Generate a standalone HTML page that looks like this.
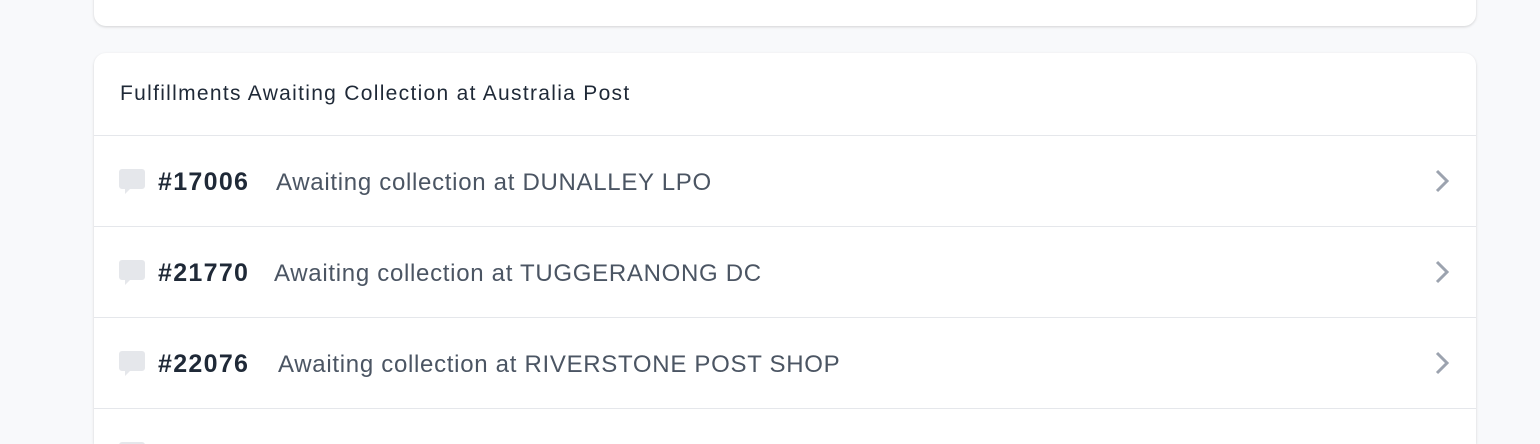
<!DOCTYPE html>
<html><head><style>
html,body{margin:0;width:1540px;height:444px;overflow:hidden}
body{background:#f8f9fb;font-family:"Liberation Sans",sans-serif;position:relative}
.card{position:absolute;left:94px;width:1382px;background:#fff;border-radius:12px;box-shadow:0 1px 3px rgba(0,0,0,.1),0 1px 2px rgba(0,0,0,.06)}
.h{height:83px;border-bottom:1px solid #e5e7eb;box-sizing:border-box;padding:29px 0 0 26px;font-size:21px;letter-spacing:1.3px;color:#1f2937}
.r{height:91px;border-bottom:1px solid #e5e7eb;box-sizing:border-box;position:relative}
.ic{position:absolute;left:25px;top:33px}
.n{position:absolute;left:64px;top:32px;font-size:25px;letter-spacing:1.3px;font-weight:bold;color:#1f2937}
.t{position:absolute;top:33px;font-size:24px;letter-spacing:0.7px;color:#4b5563}
.ch{position:absolute;right:26px;top:33px}
</style></head><body>
<div class="card" style="top:-20px;height:46px"></div>
<div class="card" style="top:53px;height:391px;border-radius:12px 12px 0 0">
<div class="h">Fulfillments Awaiting Collection at Australia Post</div>
<div class="r"><svg class="ic" width="26" height="25" viewBox="0 0 26 25"><path d="M3 0h20a3 3 0 0 1 3 3v14a3 3 0 0 1-3 3H11l-5 5v-5H3a3 3 0 0 1-3-3V3a3 3 0 0 1 3-3z" fill="#e5e7eb"/></svg><span class="n">#17006</span><span class="t" style="left:182px">Awaiting collection at DUNALLEY LPO</span><svg class="ch" width="16" height="24" viewBox="0 0 16 24"><path d="M3 2l10 10-10 10" stroke="#9ca3af" stroke-width="3" fill="none"/></svg></div>
<div class="r"><svg class="ic" width="26" height="25" viewBox="0 0 26 25"><path d="M3 0h20a3 3 0 0 1 3 3v14a3 3 0 0 1-3 3H11l-5 5v-5H3a3 3 0 0 1-3-3V3a3 3 0 0 1 3-3z" fill="#e5e7eb"/></svg><span class="n">#21770</span><span class="t" style="left:180px">Awaiting collection at TUGGERANONG DC</span><svg class="ch" width="16" height="24" viewBox="0 0 16 24"><path d="M3 2l10 10-10 10" stroke="#9ca3af" stroke-width="3" fill="none"/></svg></div>
<div class="r"><svg class="ic" width="26" height="25" viewBox="0 0 26 25"><path d="M3 0h20a3 3 0 0 1 3 3v14a3 3 0 0 1-3 3H11l-5 5v-5H3a3 3 0 0 1-3-3V3a3 3 0 0 1 3-3z" fill="#e5e7eb"/></svg><span class="n">#22076</span><span class="t" style="left:184px">Awaiting collection at RIVERSTONE POST SHOP</span><svg class="ch" width="16" height="24" viewBox="0 0 16 24"><path d="M3 2l10 10-10 10" stroke="#9ca3af" stroke-width="3" fill="none"/></svg></div>
<div style="position:relative;height:36px;overflow:hidden"><svg class="ic" width="26" height="25" viewBox="0 0 26 25"><path d="M3 0h20a3 3 0 0 1 3 3v14a3 3 0 0 1-3 3H11l-5 5v-5H3a3 3 0 0 1-3-3V3a3 3 0 0 1 3-3z" fill="#e5e7eb"/></svg></div>
</div>
</body></html>
